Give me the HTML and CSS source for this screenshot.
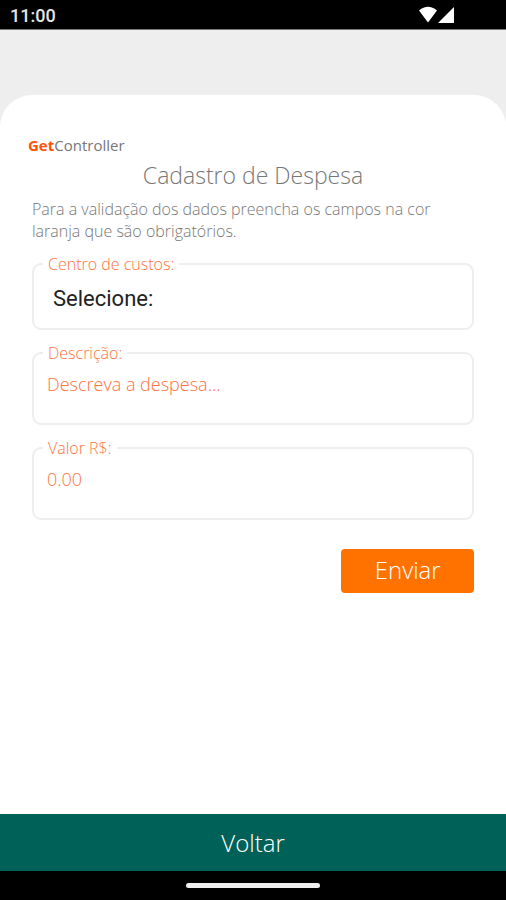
FILE: index.html
```html
<!DOCTYPE html>
<html lang="pt-BR">
<head>
<meta charset="utf-8">
<meta name="viewport" content="width=device-width, initial-scale=1">
<title>Cadastro de Despesa</title>
<link rel="stylesheet" href="styles.css">
</head>
<body>
<header class="status">
  <time class="clock">11:00</time>
  <svg class="signals" viewBox="0 0 38 18" aria-hidden="true">
    <path d="M1 4.500Q10 -3 19 4.500L10 16.500Z"/>
    <path d="M36 1V17H20Z"/>
  </svg>
</header>
<main class="sheet">
  <p class="brand"><strong>Get</strong>Controller</p>
  <h1 class="title">Cadastro de Despesa</h1>
  <form class="form">
    <p class="hint">Para a validação dos dados preencha os campos na cor laranja que são obrigatórios.</p>
    <fieldset class="field">
      <legend><label for="centro">Centro de custos:</label></legend>
      <select id="centro" class="control choice"><option>Selecione:</option></select>
    </fieldset>
    <fieldset class="field">
      <legend><label for="descricao">Descrição:</label></legend>
      <input id="descricao" class="control entry" type="text" placeholder="Descreva a despesa...">
    </fieldset>
    <fieldset class="field">
      <legend><label for="valor">Valor R$:</label></legend>
      <input id="valor" class="control entry" type="text" inputmode="decimal" placeholder="0.00">
    </fieldset>
    <button class="send" type="submit">Enviar</button>
  </form>
</main>
<button class="back" type="button">Voltar</button>
<footer class="gesture"><span class="handle"></span></footer>
</body>
</html>
```
FILE: styles.css
```css
* {
  box-sizing: border-box;
}

body {
  margin: 0;
  min-height: 100vh;
  display: flex;
  flex-direction: column;
  background: #eee;
  color: #777;
  font-family: "Open Sans", "Noto Sans", sans-serif;
  font-weight: 300;
}

p,
h1 {
  margin: 0;
}

.status {
  display: flex;
  justify-content: space-between;
  align-items: center;
  height: 30px;
  padding: 0 50px 0 10px;
  background: #000;
  border-bottom: 1px solid #777;
  color: #e4e4e4;
}

.clock {
  padding-top: 2px;
  font: 500 18px/28px Roboto, sans-serif;
}

.signals {
  width: 38px;
  height: 18px;
  fill: #fff;
}

.sheet {
  flex: 1;
  margin-top: 65px;
  padding: 40px 32px 24px;
  border-radius: 32px 32px 0 0;
  background: #fff;
}

.brand {
  margin-left: -4px;
  font-size: 15px;
  line-height: 20px;
  font-weight: 400;
}

.brand strong {
  color: #ff5208;
  font-weight: 700;
}

.title {
  padding-top: 4px;
  font-size: 23px;
  line-height: 32px;
  font-weight: 300;
  text-align: center;
}

.form {
  display: flex;
  flex-direction: column;
}

.hint {
  padding: 7px 0 11px;
  font-size: 16px;
  line-height: 22px;
}

.field {
  min-width: 0;
  margin: 0 0 12px;
  padding: 0 9px;
  border: 2px solid #eee;
  border-radius: 9px;
}

.field legend {
  padding: 0 5px;
  color: #ff7240;
  font-size: 16px;
  line-height: 22px;
}

.control {
  display: block;
  width: 100%;
  border: 0;
  outline: 0;
  background: transparent;
  font-family: inherit;
}

.choice {
  height: 53px;
  padding: 0 10px 6px;
  appearance: none;
  color: #222;
  font: 400 22px/26px Roboto, sans-serif;
}

.entry {
  height: 59px;
  padding: 0 4px 20px;
  color: #ff7240;
  font-size: 18px;
  font-weight: 300;
}

.entry::placeholder {
  color: #ff7240;
  opacity: 1;
}

.send {
  align-self: flex-end;
  width: 30%;
  height: 44px;
  margin-top: 17px;
  padding: 0 0 4px;
  border: 0;
  border-radius: 4px;
  background: #ff7200;
  color: #fff;
  font: inherit;
  font-size: 24px;
}

.back {
  height: 57px;
  border: 0;
  background: #006158;
  color: #fff;
  font: inherit;
  font-size: 24px;
}

.gesture {
  display: flex;
  justify-content: center;
  align-items: center;
  height: 29px;
  background: #000;
}

.handle {
  width: 134px;
  height: 5px;
  border-radius: 3px;
  background: #eee;
}
```
